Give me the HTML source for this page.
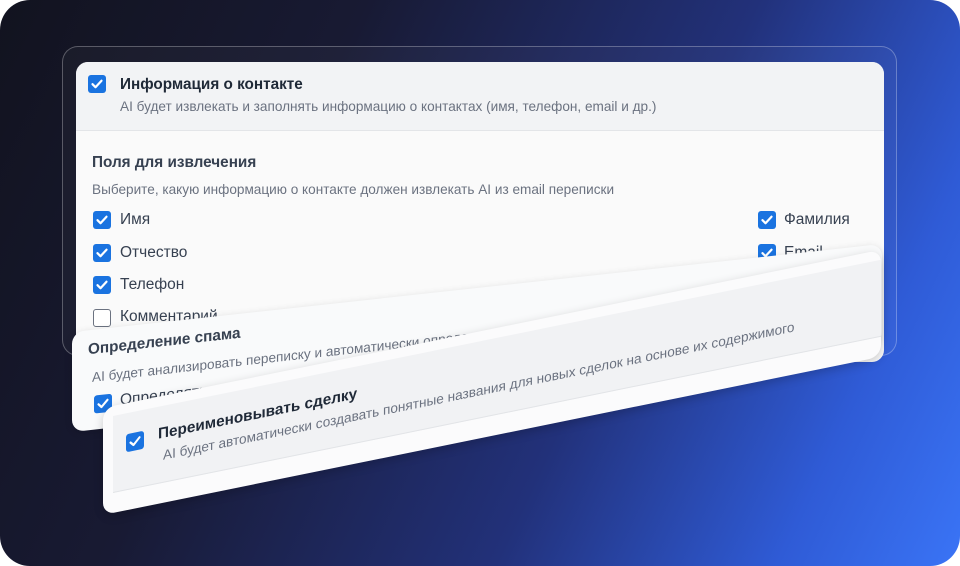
<!DOCTYPE html>
<html><head><meta charset="utf-8"><style>
*{box-sizing:border-box;margin:0;padding:0}
html,body{width:960px;height:566px;background:#fff;overflow:hidden;font-family:"Liberation Sans","DejaVu Sans",sans-serif}
.bg{position:absolute;left:0;top:0;width:960px;height:566px;border-radius:30px;overflow:hidden;
background:linear-gradient(115deg,#12131f 0%,#181a33 30%,#22317a 62%,#2f5bd6 85%,#3a74f6 100%)}
.frame{position:absolute;left:62px;top:46px;width:835px;height:310px;border:1px solid rgba(255,255,255,.28);border-radius:16px;background:rgba(255,255,255,.03)}
.card{position:absolute;left:76px;top:62px;width:808px;height:300px;border-radius:12px;background:#fafafa;overflow:hidden}
.head{height:69px;background:#f2f3f5;border-bottom:1px solid #e3e5e8;position:relative}
.cb{position:absolute;width:18px;height:18px;border-radius:3px;background:#1a73e0}
.cb svg{position:absolute;left:2px;top:2px}
.cb.off{background:#fff;border:1.5px solid #6b7280}
.t{position:absolute;color:#1f2937;white-space:nowrap}
.b{font-weight:bold;font-size:15.3px}
.s{font-size:13.6px;color:#6b7280}
.r{font-size:15.5px;color:#374151}
.c2{position:absolute;left:72px;top:332px;width:810px;height:100px;background:#f9fafb;border-radius:12px;transform:skewY(-6.2deg);transform-origin:0 0;box-shadow:0 2px 8px rgba(0,0,0,.15);overflow:hidden}
.c3{position:absolute;left:103px;top:408px;width:778px;height:107px;background:#fbfbfc;border-radius:12px;transform:skewY(-11.5deg);transform-origin:0 0;box-shadow:0 3px 10px rgba(0,0,0,.2);overflow:hidden}
.c3 .band{position:absolute;left:10px;top:10px;right:0;height:77px;background:#f1f2f4;border-bottom:1px solid #e2e4e7}
</style></head><body>
<div class="bg">
<div class="frame"></div>
<div class="card">
 <div class="head">
  <div class="cb" style="left:12px;top:13px"><svg width="14" height="14" viewBox="0 0 14 14"><path d="M2.5 7.2l3 3 6-6.5" stroke="#fff" stroke-width="2.2" fill="none" stroke-linecap="round" stroke-linejoin="round"/></svg></div>
  <div class="t b" style="left:44px;top:14px">Информация о контакте</div>
  <div class="t s" style="left:44px;top:37px">AI будет извлекать и заполнять информацию о контактах (имя, телефон, email и др.)</div>
 </div>
 <div class="t" style="left:16px;top:92px;font-size:15.3px;font-weight:bold;color:#374151">Поля для извлечения</div>
 <div class="t s" style="left:16px;top:120px">Выберите, какую информацию о контакте должен извлекать AI из email переписки</div>
 <div class="cb" style="left:17px;top:149px"><svg width="14" height="14" viewBox="0 0 14 14"><path d="M2.5 7.2l3 3 6-6.5" stroke="#fff" stroke-width="2.2" fill="none" stroke-linecap="round" stroke-linejoin="round"/></svg></div>
 <div class="t r" style="left:44px;top:149px">Имя</div>
 <div class="cb" style="left:17px;top:182px"><svg width="14" height="14" viewBox="0 0 14 14"><path d="M2.5 7.2l3 3 6-6.5" stroke="#fff" stroke-width="2.2" fill="none" stroke-linecap="round" stroke-linejoin="round"/></svg></div>
 <div class="t r" style="left:44px;top:182px">Отчество</div>
 <div class="cb" style="left:17px;top:214px"><svg width="14" height="14" viewBox="0 0 14 14"><path d="M2.5 7.2l3 3 6-6.5" stroke="#fff" stroke-width="2.2" fill="none" stroke-linecap="round" stroke-linejoin="round"/></svg></div>
 <div class="t r" style="left:44px;top:214px">Телефон</div>
 <div class="cb off" style="left:17px;top:247px"></div>
 <div class="t r" style="left:44px;top:246px">Комментарий</div>
 <div class="cb" style="left:682px;top:149px"><svg width="14" height="14" viewBox="0 0 14 14"><path d="M2.5 7.2l3 3 6-6.5" stroke="#fff" stroke-width="2.2" fill="none" stroke-linecap="round" stroke-linejoin="round"/></svg></div>
 <div class="t r" style="left:708px;top:149px">Фамилия</div>
 <div class="cb" style="left:682px;top:182px"><svg width="14" height="14" viewBox="0 0 14 14"><path d="M2.5 7.2l3 3 6-6.5" stroke="#fff" stroke-width="2.2" fill="none" stroke-linecap="round" stroke-linejoin="round"/></svg></div>
 <div class="t r" style="left:708px;top:182px">Email</div>
</div>
<div class="c2">
 <div class="t b" style="left:16px;top:11px;color:#374151">Определение спама</div>
 <div class="t s" style="left:20px;top:40px">AI будет анализировать переписку и автоматически определять спам</div>
 <div class="cb" style="left:22px;top:66px"><svg width="14" height="14" viewBox="0 0 14 14"><path d="M2.5 7.2l3 3 6-6.5" stroke="#fff" stroke-width="2.2" fill="none" stroke-linecap="round" stroke-linejoin="round"/></svg></div>
 <div class="t r" style="left:48px;top:65px">Определять спам</div>
</div>
<div class="c3">
 <div class="band"></div>
 <div class="cb" style="left:23px;top:31px"><svg width="14" height="14" viewBox="0 0 14 14"><path d="M2.5 7.2l3 3 6-6.5" stroke="#fff" stroke-width="2.2" fill="none" stroke-linecap="round" stroke-linejoin="round"/></svg></div>
 <div class="t b" style="left:55px;top:29px">Переименовывать сделку</div>
 <div class="t s" style="left:60px;top:52px">AI будет автоматически создавать понятные названия для новых сделок на основе их содержимого</div>
</div>
</div>
</body></html>
